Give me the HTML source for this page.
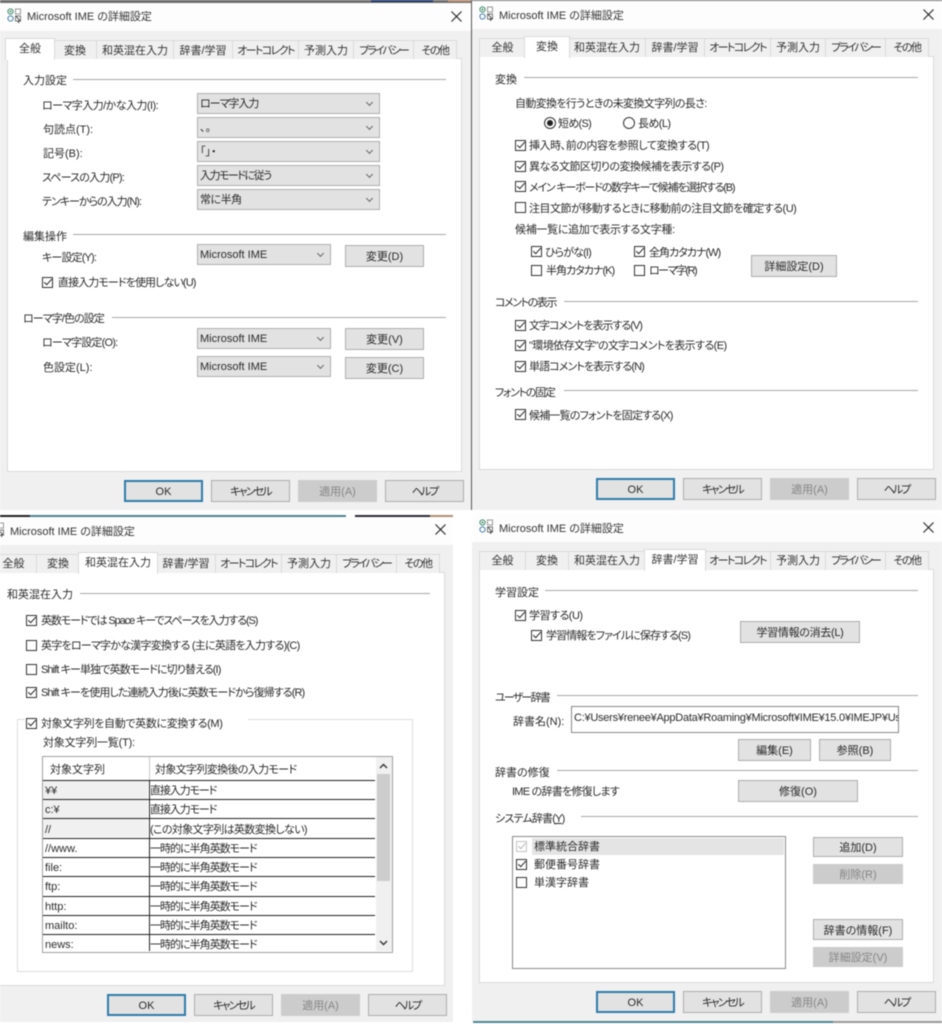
<!DOCTYPE html>
<html lang="ja"><head><meta charset="utf-8"><title>Microsoft IME の詳細設定</title>
<style>
html,body{margin:0;padding:0;background:#fff}
#p{position:relative;width:942px;height:1024px;overflow:hidden;background:#fff;font:11px/18px "Liberation Sans","Noto Sans CJK JP",sans-serif;color:#2a2a2a;font-feature-settings:"palt";filter:blur(.45px)}
#p div,#p svg{position:absolute}
.d{overflow:hidden;background:#f0f0f0}
.tb{left:0;top:0;right:0;height:31px;background:#fdfdfd}
.ti{left:27px;top:8px;font-size:11px;white-space:nowrap;color:#333}
.pn{left:7px;top:58px;width:453px;height:412px;background:#fff;border:1px solid #dadada}
.tab{top:40px;height:18px;background:#f0f0f0;border:1px solid #dadada;border-bottom:0;box-sizing:content-box;text-align:center;line-height:19px;white-space:nowrap;margin-left:-1px;color:#333}
.A .tab{line-height:21px}
.tab.a,.A .tab.a{top:38px;height:21px;background:#fff;line-height:20px;margin-left:-2px;padding:0 1px;z-index:2;border-bottom:0}
.t{white-space:nowrap;height:18px;margin-top:1px}
.ln{height:1px;background:#a8a8a8}
.c{background:#e2e2e2;border:1px solid #aeaeae;box-sizing:border-box;height:21px;line-height:20px;padding-left:2px;white-space:nowrap}
.c::after{content:"";position:absolute;right:7px;top:6px;width:4px;height:4px;border-right:1px solid #666;border-bottom:1px solid #666;transform:rotate(45deg)}
.b{background:#e2e2e2;border:1px solid #adadad;box-sizing:border-box;height:22px;line-height:23px;text-align:center;white-space:nowrap;color:#2a2a2a}
.b.o{border:2px solid #2f7cab;line-height:21px;background:#e2e2e2}
.b.x{background:#ccc;border-color:#ccc;color:#858585}
.k{width:9px;height:9px;border:1px solid #333;background:#fff;box-sizing:content-box}
.k.on::after{content:"";position:absolute;left:3px;top:-1px;width:3px;height:7px;border-right:1.2px solid #222;border-bottom:1.2px solid #222;transform:rotate(42deg)}
.k.g{border-color:#c4c4c4}
.k.g::after{border-color:#b5b5b5}
.r{height:1px;background:#222;left:43px;width:332px}
</style></head><body><div id="p">

<div style="left:0;top:0;width:471px;height:3px;background:#6e6e6e"></div>
<div style="left:371px;top:0;width:62px;height:2px;background:#1e3566"></div>
<div style="left:448px;top:0;width:23px;height:2px;background:#b08a70"></div>
<div style="left:472px;top:0;width:470px;height:1px;background:#777"></div>

<!-- A -->
<div class="d A" style="left:0;top:3px;width:471px;height:507px"><div style="left:0;top:-3px;width:471px;height:510px">
<div class="tb"></div>
<svg style="left:7px;top:8px" width="15" height="15" viewBox="0 0 15 15" fill="none"><circle cx="3.5" cy="3.5" r="2.6" stroke="#3d8a6a"/><circle cx="3.5" cy="3.5" r="1" fill="#3d8a6a"/><rect x="8.5" y="1" width="5" height="5" stroke="#999"/><circle cx="3.5" cy="10.5" r="2.6" stroke="#4a7fb0"/><rect x="8.5" y="8" width="5" height="5" stroke="#777"/><path d="M9 8l4 5-2 0 1 2" stroke="#444"/></svg>
<div class="ti">Microsoft IME の詳細設定</div>
<svg style="left:451px;top:11px" width="11" height="11" viewBox="0 0 11 11"><path d="M.5.5l10 10M10.5.5l-10 10" stroke="#222" stroke-width="1.1"/></svg>
<div class="pn"></div>
<div class="tab a" style="left:7px;width:46px">全般</div>
<div class="tab" style="left:54px;width:42px">変換</div>
<div class="tab" style="left:97px;width:76px">和英混在入力</div>
<div class="tab" style="left:174px;width:58px">辞書/学習</div>
<div class="tab" style="left:233px;width:65px;letter-spacing:-1.6px">オートコレクト</div>
<div class="tab" style="left:299px;width:54px">予測入力</div>
<div class="tab" style="left:354px;width:59px;letter-spacing:-2px">プライバシー</div>
<div class="tab" style="left:414px;width:42px;letter-spacing:-1.5px">その他</div>
<div class="b o" style="left:124px;top:480px;width:79px">OK</div>
<div class="b" style="left:211px;top:480px;width:79px;letter-spacing:-1.8px">キャンセル</div>
<div class="b x" style="left:298px;top:480px;width:79px">適用(A)</div>
<div class="b" style="left:385px;top:480px;width:79px;letter-spacing:-2px">ヘルプ</div>
<div class="t" style="left:23px;top:71px">入力設定</div><div class="ln" style="left:73px;top:79px;width:373px"></div>
<div class="t" style="left:42px;top:96px;letter-spacing:-.55px">ローマ字入力/かな入力(I):</div>
<div class="t" style="left:43px;top:120px">句読点(T):</div>
<div class="t" style="left:43px;top:144px">記号(B):</div>
<div class="t" style="left:42px;top:168px;letter-spacing:-.8px">スペースの入力(P):</div>
<div class="t" style="left:42px;top:192px;letter-spacing:-1px">テンキーからの入力(N):</div>
<div class="c" style="left:197px;top:93px;width:183px;letter-spacing:-1px">ローマ字入力</div>
<div class="c" style="left:197px;top:117px;width:183px">、。</div>
<div class="c" style="left:197px;top:141px;width:183px">「」・</div>
<div class="c" style="left:197px;top:165px;width:183px;letter-spacing:-1.5px">入力モードに従う</div>
<div class="c" style="left:197px;top:189px;width:183px;letter-spacing:-.5px">常に半角</div>
<div class="t" style="left:23px;top:227px">編集操作</div><div class="ln" style="left:73px;top:234px;width:373px"></div>
<div class="t" style="left:42px;top:248px;letter-spacing:-.85px">キー設定(Y):</div>
<div class="c" style="left:197px;top:244px;width:134px">Microsoft IME</div>
<div class="b" style="left:345px;top:245px;width:79px">変更(D)</div>
<div class="k on" style="left:42px;top:277px"></div>
<div class="t" style="left:58px;top:273px;letter-spacing:-.9px">直接入力モードを使用しない(U)</div>
<div class="t" style="left:23px;top:309px;letter-spacing:-.9px">ローマ字/色の設定</div><div class="ln" style="left:112px;top:317px;width:334px"></div>
<div class="t" style="left:42px;top:333px;letter-spacing:-.8px">ローマ字設定(O):</div>
<div class="c" style="left:197px;top:328px;width:134px">Microsoft IME</div>
<div class="b" style="left:345px;top:328px;width:79px">変更(V)</div>
<div class="t" style="left:43px;top:358px">色設定(L):</div>
<div class="c" style="left:197px;top:356px;width:134px">Microsoft IME</div>
<div class="b" style="left:345px;top:357px;width:79px">変更(C)</div>
</div></div>
<div style="left:471px;top:0;width:1px;height:510px;background:#555"></div>

<!-- B -->
<div class="d" style="left:472px;top:1px;width:470px;height:509px"><div style="left:0;top:-3px;width:471px;height:512px">
<div class="tb"></div>
<svg style="left:7px;top:8px" width="15" height="15" viewBox="0 0 15 15" fill="none"><circle cx="3.5" cy="3.5" r="2.6" stroke="#3d8a6a"/><circle cx="3.5" cy="3.5" r="1" fill="#3d8a6a"/><rect x="8.5" y="1" width="5" height="5" stroke="#999"/><circle cx="3.5" cy="10.5" r="2.6" stroke="#4a7fb0"/><rect x="8.5" y="8" width="5" height="5" stroke="#777"/><path d="M9 8l4 5-2 0 1 2" stroke="#444"/></svg>
<div class="ti" style="top:9px">Microsoft IME の詳細設定</div>
<svg style="left:451px;top:11px" width="11" height="11" viewBox="0 0 11 11"><path d="M.5.5l10 10M10.5.5l-10 10" stroke="#222" stroke-width="1.1"/></svg>
<div class="pn"></div>
<div class="tab" style="left:8px;width:45px">全般</div>
<div class="tab a" style="left:54px;width:42px">変換</div>
<div class="tab" style="left:97px;width:76px">和英混在入力</div>
<div class="tab" style="left:174px;width:58px">辞書/学習</div>
<div class="tab" style="left:233px;width:65px;letter-spacing:-1.6px">オートコレクト</div>
<div class="tab" style="left:299px;width:54px">予測入力</div>
<div class="tab" style="left:354px;width:59px;letter-spacing:-2px">プライバシー</div>
<div class="tab" style="left:414px;width:42px;letter-spacing:-1.5px">その他</div>
<div class="b o" style="left:124px;top:480px;width:79px">OK</div>
<div class="b" style="left:211px;top:480px;width:79px;letter-spacing:-1.8px">キャンセル</div>
<div class="b x" style="left:298px;top:480px;width:79px">適用(A)</div>
<div class="b" style="left:385px;top:480px;width:79px;letter-spacing:-2px">ヘルプ</div>
</div></div>
<div class="t" style="left:495px;top:70px">変換</div><div class="ln" style="left:524px;top:77px;width:394px"></div>
<div class="t" style="left:515px;top:94px;letter-spacing:-.65px">自動変換を行うときの未変換文字列の長さ:</div>
<svg style="left:543px;top:116px" width="14" height="14"><circle cx="7" cy="7" r="5.5" fill="#fff" stroke="#333"/><circle cx="7" cy="7" r="3" fill="#222"/></svg>
<div class="t" style="left:558px;top:114px;letter-spacing:-.7px">短め(S)</div>
<svg style="left:622px;top:116px" width="14" height="14"><circle cx="7" cy="7" r="5.5" fill="#fff" stroke="#333"/></svg>
<div class="t" style="left:638px;top:114px;letter-spacing:-.6px">長め(L)</div>
<div class="k on" style="left:515px;top:140px"></div><div class="t" style="left:529px;top:136px;letter-spacing:-.45px">挿入時、前の内容を参照して変換する(T)</div>
<div class="k on" style="left:515px;top:161px"></div><div class="t" style="left:529px;top:157px;letter-spacing:-.55px">異なる文節区切りの変換候補を表示する(P)</div>
<div class="k on" style="left:515px;top:181px"></div><div class="t" style="left:529px;top:178px;letter-spacing:-1.2px">メイン キーボードの数字キーで候補を選択する(B)</div>
<div class="k" style="left:515px;top:202px"></div><div class="t" style="left:529px;top:199px;letter-spacing:-.5px">注目文節が移動するときに移動前の注目文節を確定する(U)</div>
<div class="t" style="left:515px;top:220px;letter-spacing:-.3px">候補一覧に追加で表示する文字種:</div>
<div class="k on" style="left:531px;top:246px"></div><div class="t" style="left:545px;top:243px;letter-spacing:-.85px">ひらがな(I)</div>
<div class="k on" style="left:634px;top:246px"></div><div class="t" style="left:649px;top:243px;letter-spacing:-1px">全角カタカナ(W)</div>
<div class="k" style="left:531px;top:265px"></div><div class="t" style="left:546px;top:261px;letter-spacing:-1px">半角カタカナ(K)</div>
<div class="k" style="left:634px;top:265px"></div><div class="t" style="left:649px;top:261px;letter-spacing:-1.5px">ローマ字(R)</div>
<div class="b" style="left:751px;top:255px;width:86px">詳細設定(D)</div>
<div class="t" style="left:495px;top:293px;letter-spacing:-1.4px">コメントの表示</div><div class="ln" style="left:564px;top:301px;width:354px"></div>
<div class="k on" style="left:515px;top:320px"></div><div class="t" style="left:529px;top:316px;letter-spacing:-1px">文字コメントを表示する(V)</div>
<div class="k on" style="left:515px;top:340px"></div><div class="t" style="left:529px;top:336px;letter-spacing:-.6px">"環境依存文字"の文字コメントを表示する(E)</div>
<div class="k on" style="left:515px;top:361px"></div><div class="t" style="left:529px;top:357px;letter-spacing:-.9px">単語コメントを表示する(N)</div>
<div class="t" style="left:495px;top:383px;letter-spacing:-1.3px">フォントの固定</div><div class="ln" style="left:564px;top:390px;width:354px"></div>
<div class="k on" style="left:515px;top:409px"></div><div class="t" style="left:529px;top:406px;letter-spacing:-.8px">候補一覧のフォントを固定する(X)</div>

<!-- top strip of C -->
<div style="left:0;top:515px;width:30px;height:2px;background:#222"></div>
<div style="left:30px;top:515px;width:316px;height:2px;background:#50828f"></div>
<div style="left:355px;top:515px;width:75px;height:2px;background:#2a2a3a"></div>
<div style="left:430px;top:515px;width:23px;height:2px;background:#b09070"></div>

<!-- C -->
<div class="d" style="left:0;top:517px;width:453px;height:505px"><div style="left:-17px;top:-3px;width:471px;height:510px">
<div class="tb"></div>
<svg style="left:7px;top:8px" width="15" height="15" viewBox="0 0 15 15" fill="none"><circle cx="3.5" cy="3.5" r="2.6" stroke="#3d8a6a"/><circle cx="3.5" cy="3.5" r="1" fill="#3d8a6a"/><rect x="8.5" y="1" width="5" height="5" stroke="#999"/><circle cx="3.5" cy="10.5" r="2.6" stroke="#4a7fb0"/><rect x="8.5" y="8" width="5" height="5" stroke="#777"/><path d="M9 8l4 5-2 0 1 2" stroke="#444"/></svg>
<div class="ti" style="top:9px">Microsoft IME の詳細設定</div>
<svg style="left:452px;top:10px" width="11" height="11" viewBox="0 0 11 11"><path d="M.5.5l10 10M10.5.5l-10 10" stroke="#222" stroke-width="1.1"/></svg>
<div class="pn"></div>
<div class="tab" style="left:8px;width:45px">全般</div>
<div class="tab" style="left:54px;width:42px">変換</div>
<div class="tab a" style="left:97px;width:76px">和英混在入力</div>
<div class="tab" style="left:174px;width:58px">辞書/学習</div>
<div class="tab" style="left:233px;width:65px;letter-spacing:-1.6px">オートコレクト</div>
<div class="tab" style="left:299px;width:54px">予測入力</div>
<div class="tab" style="left:354px;width:59px;letter-spacing:-2px">プライバシー</div>
<div class="tab" style="left:414px;width:42px;letter-spacing:-1.5px">その他</div>
<div class="b o" style="left:124px;top:480px;width:79px">OK</div>
<div class="b" style="left:211px;top:480px;width:79px;letter-spacing:-1.8px">キャンセル</div>
<div class="b x" style="left:298px;top:480px;width:79px">適用(A)</div>
<div class="b" style="left:385px;top:480px;width:79px;letter-spacing:-2px">ヘルプ</div>
</div></div>
<div class="t" style="left:7px;top:585px">和英混在入力</div><div class="ln" style="left:80px;top:593px;width:350px"></div>
<div class="k on" style="left:26px;top:615px"></div><div class="t" style="left:41px;top:611px;letter-spacing:-1.1px">英数モードでは Space キーでスペースを入力する(S)</div>
<div class="k" style="left:26px;top:640px"></div><div class="t" style="left:41px;top:636px;letter-spacing:-.75px">英字をローマ字かな漢字変換する (主に英語を入力する)(C)</div>
<div class="k" style="left:26px;top:664px"></div><div class="t" style="left:41px;top:660px;letter-spacing:-.9px">Shift キー単独で英数モードに切り替える(I)</div>
<div class="k on" style="left:26px;top:687px"></div><div class="t" style="left:41px;top:683px;letter-spacing:-.9px">Shift キーを使用した連続入力後に英数モードから復帰する(R)</div>
<div style="left:17px;top:719px;width:394px;height:251px;border:1px solid #dcdcdc"></div>
<div style="left:25px;top:715px;width:223px;height:10px;background:#fff"></div>
<div class="k on" style="left:26px;top:718px"></div><div class="t" style="left:41px;top:714px;letter-spacing:-.35px">対象文字列を自動で英数に変換する(M)</div>
<div class="t" style="left:43px;top:733px;letter-spacing:-.2px">対象文字列一覧(T):</div>
<div style="left:42px;top:756px;width:349px;height:195px;border:1px solid #a0a0a0;background:#fff"></div>
<div style="left:43px;top:781px;width:105px;height:56px;background:#f0f0f0"></div>
<div style="left:149px;top:757px;width:1px;height:23px;background:#c8c8c8"></div>
<div style="left:149px;top:780px;width:1px;height:171px;background:#222"></div>
<div class="r" style="top:780px"></div><div class="r" style="top:799px"></div><div class="r" style="top:818px"></div><div class="r" style="top:838px"></div><div class="r" style="top:857px"></div><div class="r" style="top:876px"></div><div class="r" style="top:896px"></div><div class="r" style="top:915px"></div><div class="r" style="top:934px"></div>
<div style="left:376px;top:757px;width:16px;height:194px;background:#f0f0f0"></div>
<div style="left:377px;top:774px;width:13px;height:107px;background:#cdcdcd"></div>
<svg style="left:379px;top:763px" width="9" height="7"><path d="M1 5l3.5-3.5L8 5" fill="none" stroke="#333" stroke-width="1.4"/></svg>
<svg style="left:379px;top:939px" width="9" height="7"><path d="M1 2l3.5 3.5L8 2" fill="none" stroke="#333" stroke-width="1.4"/></svg>
<div class="t" style="left:50px;top:760px">対象文字列</div><div class="t" style="left:155px;top:760px;letter-spacing:-.65px">対象文字列変換後の入力モード</div>
<div class="t" style="left:45px;top:781px">¥¥</div><div class="t" style="left:150px;top:781px;letter-spacing:-1.1px">直接入力モード</div>
<div class="t" style="left:45px;top:800px">c:¥</div><div class="t" style="left:150px;top:800px;letter-spacing:-1.1px">直接入力モード</div>
<div class="t" style="left:45px;top:820px">//</div><div class="t" style="left:150px;top:820px;letter-spacing:-.65px">(この対象文字列は英数変換しない)</div>
<div class="t" style="left:45px;top:839px">//www.</div><div class="t" style="left:150px;top:839px;letter-spacing:-1px">一時的に半角英数モード</div>
<div class="t" style="left:45px;top:858px">file:</div><div class="t" style="left:150px;top:858px;letter-spacing:-1px">一時的に半角英数モード</div>
<div class="t" style="left:45px;top:877px">ftp:</div><div class="t" style="left:150px;top:877px;letter-spacing:-1px">一時的に半角英数モード</div>
<div class="t" style="left:45px;top:897px">http:</div><div class="t" style="left:150px;top:897px;letter-spacing:-1px">一時的に半角英数モード</div>
<div class="t" style="left:45px;top:916px">mailto:</div><div class="t" style="left:150px;top:916px;letter-spacing:-1px">一時的に半角英数モード</div>
<div class="t" style="left:45px;top:935px">news:</div><div class="t" style="left:150px;top:935px;letter-spacing:-1px">一時的に半角英数モード</div>

<!-- D -->
<div class="d" style="left:472px;top:514px;width:470px;height:507px"><div style="left:0;top:-3px;width:471px;height:510px">
<div class="tb"></div>
<svg style="left:7px;top:8px" width="15" height="15" viewBox="0 0 15 15" fill="none"><circle cx="3.5" cy="3.5" r="2.6" stroke="#3d8a6a"/><circle cx="3.5" cy="3.5" r="1" fill="#3d8a6a"/><rect x="8.5" y="1" width="5" height="5" stroke="#999"/><circle cx="3.5" cy="10.5" r="2.6" stroke="#4a7fb0"/><rect x="8.5" y="8" width="5" height="5" stroke="#777"/><path d="M9 8l4 5-2 0 1 2" stroke="#444"/></svg>
<div class="ti" style="top:9px">Microsoft IME の詳細設定</div>
<svg style="left:451px;top:11px" width="11" height="11" viewBox="0 0 11 11"><path d="M.5.5l10 10M10.5.5l-10 10" stroke="#222" stroke-width="1.1"/></svg>
<div class="pn"></div>
<div class="tab" style="left:8px;width:45px">全般</div>
<div class="tab" style="left:54px;width:42px">変換</div>
<div class="tab" style="left:97px;width:76px">和英混在入力</div>
<div class="tab a" style="left:174px;width:58px">辞書/学習</div>
<div class="tab" style="left:233px;width:65px;letter-spacing:-1.6px">オートコレクト</div>
<div class="tab" style="left:299px;width:54px">予測入力</div>
<div class="tab" style="left:354px;width:59px;letter-spacing:-2px">プライバシー</div>
<div class="tab" style="left:414px;width:42px;letter-spacing:-1.5px">その他</div>
<div class="b o" style="left:124px;top:480px;width:79px">OK</div>
<div class="b" style="left:211px;top:480px;width:79px;letter-spacing:-1.8px">キャンセル</div>
<div class="b x" style="left:298px;top:480px;width:79px">適用(A)</div>
<div class="b" style="left:385px;top:480px;width:79px;letter-spacing:-2px">ヘルプ</div>
</div></div>
<div style="left:473px;top:1021px;width:360px;height:2px;background:#4f8594"></div>
<div style="left:833px;top:1021px;width:109px;height:2px;background:#999"></div>
<div class="t" style="left:495px;top:583px">学習設定</div><div class="ln" style="left:545px;top:590px;width:373px"></div>
<div class="k on" style="left:515px;top:610px"></div><div class="t" style="left:529px;top:606px;letter-spacing:-.5px">学習する(U)</div>
<div class="k on" style="left:531px;top:630px"></div><div class="t" style="left:546px;top:626px;letter-spacing:-.9px">学習情報をファイルに保存する(S)</div>
<div class="b" style="left:740px;top:621px;width:120px;letter-spacing:-.3px">学習情報の消去(L)</div>
<div class="t" style="left:495px;top:688px;letter-spacing:-1.8px">ユーザー辞書</div><div class="ln" style="left:557px;top:695px;width:361px"></div>
<div class="t" style="left:513px;top:712px">辞書名(N):</div>
<div style="left:571px;top:706px;width:326px;height:25px;background:#fff;border:1px solid #888;overflow:hidden"><div class="t" style="left:2px;top:1px;letter-spacing:-.25px">C:¥Users¥renee¥AppData¥Roaming¥Microsoft¥IME¥15.0¥IMEJP¥Us</div></div>
<div class="b" style="left:738px;top:739px;width:73px">編集(E)</div>
<div class="b" style="left:819px;top:739px;width:72px">参照(B)</div>
<div class="t" style="left:495px;top:763px">辞書の修復</div><div class="ln" style="left:557px;top:770px;width:361px"></div>
<div class="t" style="left:512px;top:782px;letter-spacing:-.75px">IME の辞書を修復します</div>
<div class="b" style="left:738px;top:780px;width:120px">修復(O)</div>
<div class="t" style="left:495px;top:809px;letter-spacing:-.8px">システム辞書(<span style="text-decoration:underline">Y</span>)</div><div class="ln" style="left:581px;top:816px;width:337px"></div>
<div style="left:512px;top:836px;width:272px;height:131px;background:#fff;border:1px solid #8a8a8a"></div>
<div style="left:532px;top:838px;width:252px;height:17px;background:#e4e4e4"></div>
<div class="k on g" style="left:516px;top:841px"></div><div class="t" style="left:534px;top:837px">標準統合辞書</div>
<div class="k on" style="left:516px;top:859px"></div><div class="t" style="left:534px;top:855px">郵便番号辞書</div>
<div class="k" style="left:516px;top:877px"></div><div class="t" style="left:534px;top:873px">単漢字辞書</div>
<div class="b" style="left:813px;top:837px;width:90px;height:20px;line-height:21px">追加(D)</div>
<div class="b x" style="left:813px;top:864px;width:90px;height:20px;line-height:21px">削除(R)</div>
<div class="b" style="left:813px;top:919px;width:90px;height:21px;line-height:22px">辞書の情報(F)</div>
<div class="b x" style="left:813px;top:947px;width:90px;height:20px;line-height:21px">詳細設定(V)</div>

</div></body></html>
